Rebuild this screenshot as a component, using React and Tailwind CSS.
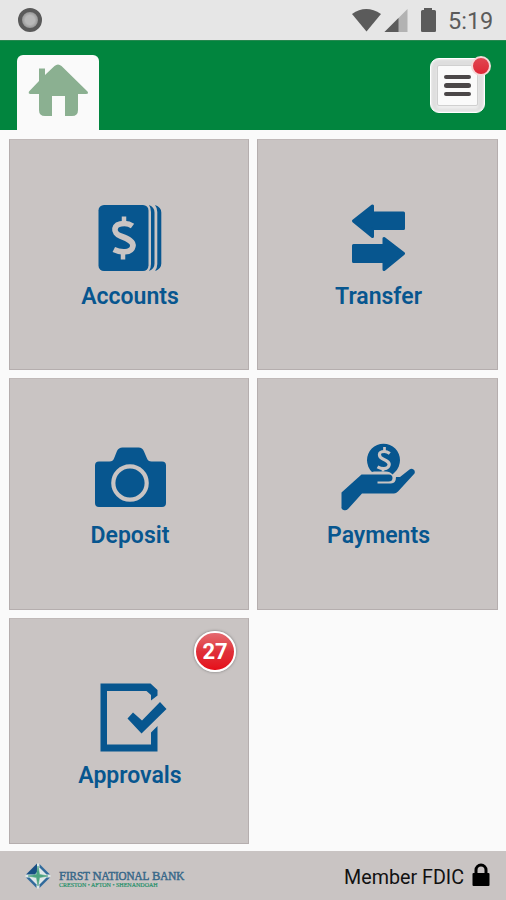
import React from "react";

function AccountsIcon() {
  return (
    <svg width="80" height="70" viewBox="0 0 80 70" fill="#07568f">
      <rect x="9.500" y="2" width="50" height="66" rx="5.500" />
      <path d="M60 2Q65.500 4 65.500 9.500V60.500Q65.500 66 60 68Q62 65 62 61V9Q62 5 60 2z" />
      <path d="M66 2Q72.300 4 72.300 9.500V60.500Q72.300 66 66 68Q68.300 65 68.300 61V9Q68.300 5 66 2z" />
      <path d="M43.500 23Q40 20.500 35.500 20.500C23.500 20.500 23.500 30 31.500 33C39.500 36 45 38.500 43.800 43.500C42.500 50.500 31 49.500 24.800 46.500" fill="none" stroke="#c9c4c3" strokeWidth="5.700" />
      <path d="M35 13.500v7M34 48v8.500" stroke="#c9c4c3" strokeWidth="4.500" />
    </svg>
  );
}

function TransferIcon() {
  return (
    <svg width="80" height="70" viewBox="0 0 80 70" fill="#07568f" stroke="#07568f" strokeWidth="3" strokeLinejoin="round">
      <path d="M15.500 18 34.500 3v7H65.500V25.500H34.500v8z" />
      <path d="M65.500 50.500 46 35.500v7H15.500V58.500H46v8z" />
    </svg>
  );
}

function DepositIcon() {
  return (
    <svg width="80" height="70" viewBox="0 0 80 70" fill="#07568f">
      <path d="M10 19.500h10.500q3.500 0 4.500-3l3-7.500Q29.500 5.500 33.500 5.500h16q4 0 5.500 4l3 7q1 3 4.500 3H73q4 0 4 4v37.500q0 4-4 4H10q-4 0-4-4V23.500q0-4 4-4z" />
      <circle cx="41" cy="41" r="16.700" fill="none" stroke="#c9c4c3" strokeWidth="4.200" />
    </svg>
  );
}

function PaymentsIcon() {
  return (
    <svg width="80" height="70" viewBox="0 0 80 70" fill="#07568f">
      <path d="M34 30A16.500 16.500 0 1 1 57 30L54.500 32.500Q52 29.500 48 29.500H36z" />
      <path d="M51.800 11.500Q49 9.500 46.500 9.500C39.500 9.500 40.500 15 45 17C49.500 19 52 20.500 51 23.500C49.500 28 43 26.800 39.500 24.800" fill="none" stroke="#c9c4c3" strokeWidth="3.200" />
      <path d="M46.500 5v4M45 26v3.500" stroke="#c9c4c3" strokeWidth="2.700" />
      <path d="M23.500 32.500H51q3.500 0 3.500 3.500t-4 3.500H39.500v2H53q5 0 5-6.500h4L71.500 27.500q2-1.500 4 0t1 4L60 49.500q-2 2-4 2H24L10 67q-2 2-4.500 1t-2-3V50.500z" />
    </svg>
  );
}

function ApprovalsIcon() {
  return (
    <svg width="80" height="70" viewBox="0 0 80 70" fill="#07568f">
      <path d="M11.500 1.500H61.500L68.500 8V13.500L62 18.500V13L57.500 9H18V62.500H62V50.500L68.500 44V69.500H11.500z" />
      <path d="M38.500 36.500 44 30.500 53 38.500 71 20 77.500 27 52.500 51.500z" />
    </svg>
  );
}

function Tile({ icon, label, badge }) {
  return (
    <div className="relative flex flex-col items-center border border-[#b5aeae] border-t-[#c0b9b8] bg-[#c9c4c3] pt-[63px] text-[#07568f]">
      {icon}
      <div className="mt-3 ml-[2px] text-[23px] leading-6 font-semibold whitespace-nowrap">{label}</div>
      {badge && (
        <div className="absolute top-[12px] right-[12px] flex h-[41px] w-[42px] items-center justify-center rounded-full border-2 border-white bg-linear-to-b from-[#e46970] via-[#df2f39] to-[#e60b18] text-[22px] font-bold text-white shadow-[0_0_3px_#777]">
          {badge}
        </div>
      )}
    </div>
  );
}

function BankLogo() {
  return (
    <div className="flex items-center gap-[8px]">
      <svg width="26" height="26" viewBox="0 0 26 26">
        <path d="M13 0 26 13 13 26 0 13z" fill="#dfe7e8" />
        <path d="M12 .5 1 11.500 10 11.500 12 9z" fill="#174e83" />
        <path d="M1 14.500 11.500 25V21.500L4.500 14.500z" fill="#316a9b" />
        <path d="M14.500 1 25 11.500H21.500L14.500 4.500z" fill="#316a9b" />
        <path d="M25 14.500 14.500 25V21.500L21.500 14.500z" fill="#316a9b" />
        <path d="M13 3 14.500 11.500 23 13 14.500 14.500 13 23 11.500 14.500 3 13 11.500 11.500z" fill="#4ba380" stroke="#4ba380" strokeWidth=".6" />
      </svg>
      <div className="w-[130px] pt-[7px] whitespace-nowrap">
        <div className="origin-left scale-x-[.97] font-['Liberation_Serif',serif] text-[12px] leading-[12px] tracking-[-0.1px] text-[#386889] [-webkit-text-stroke:.45px_#386889]">
          <span className="text-[13px]">F</span><span className="text-[11.500px]">IRST</span> <span className="text-[13px]">N</span><span className="text-[11.500px]">ATIONAL</span> <span className="text-[13px]">B</span><span className="text-[11.500px]">ANK</span>
        </div>
        <div className="font-['Liberation_Serif',serif] text-[6px] leading-[7px] text-[#26906a] [-webkit-text-stroke:.2px_#26906a]">CRESTON • AFTON • SHENANDOAH</div>
      </div>
    </div>
  );
}

export default function App() {
  return (
    <div className="flex h-[900px] w-[506px] flex-col overflow-hidden bg-[#fafafa] font-[Roboto,sans-serif]">
      <div className="flex h-10 shrink-0 items-center bg-[#e6e6e6] pr-[12px] pl-[18px] text-[#5b5b5b]">
        <div className="h-6 w-6 rounded-full border-4 border-[#5a5a5a] bg-[radial-gradient(circle,#b8b8b8_40%,#929292_75%)]" />
        <svg className="ml-auto" width="88" height="26" viewBox="0 0 88 26" fill="#5b5b5b">
          <path d="M1 7Q15 -3 30 7L15.500 24.500z" />
          <path d="M56.500 2V25H33.500z" fill="#b2b2b2" />
          <path d="M47.500 11V25H33.500z" />
          <path d="M73 3V1h8v2h2.500q1.500 0 1.500 1.500V24q0 1-1.500 1h-12q-1.500 0-1.500-1V4.500Q70 3 71.500 3z" />
        </svg>
        <div className="mt-[2px] ml-[9px] w-[46px] text-[23.500px] leading-7">5:19</div>
      </div>
      <header className="flex h-[90px] shrink-0 items-start justify-between border-t border-[#26884f] bg-[#01853e] pr-[21px] pl-[17px]">
        <div className="mt-[14px] flex h-[75px] w-[82px] justify-center rounded-t-[6px] bg-[#fafafa]">
          <svg className="mt-[8px]" width="62" height="56" viewBox="0 0 62 56" fill="#8bb091">
            <path d="M2 28.500 12 18V5.500h6V12L27.500 3q3.500-3 7 0L60.500 28.500Q62 31 59 31H51v16q0 6-6 6H38V33H25v20H18q-6 0-6-6V31H3.500Q1 31 2 28.500z" />
          </svg>
        </div>
        <div className="relative mt-[17px] flex h-[55px] w-[55px] items-center justify-center rounded-[9px] border border-white bg-[#dedede] shadow-[inset_0_0_3px_#fff]">
          <div className="flex h-[41px] w-[41px] flex-col items-center justify-center gap-[4px] rounded-[2px] border border-[#d0d0d0] bg-[#fafafa] shadow-[0_3px_3px_#eee]">
            <span className="h-[4.500px] w-[27px] rounded-full bg-[#4b4748]" />
            <span className="h-[4.500px] w-[27px] rounded-full bg-[#4b4748]" />
            <span className="h-[4.500px] w-[27px] rounded-full bg-[#4b4748]" />
          </div>
          <div className="absolute -top-[3px] -right-[7px] h-[20px] w-[20px] rounded-full border-2 border-[#f4d8d8] bg-linear-to-b from-[#e04551] to-[#df2535]" />
        </div>
      </header>
      <main className="grid h-[721px] shrink-0 grid-cols-[240px_241px] grid-rows-[231px_231.500px_226px] gap-x-2 gap-y-[8px] px-[9px] pt-[9px]">
        <Tile icon={<AccountsIcon />} label="Accounts" />
        <Tile icon={<TransferIcon />} label="Transfer" />
        <Tile icon={<DepositIcon />} label="Deposit" />
        <Tile icon={<PaymentsIcon />} label="Payments" />
        <Tile icon={<ApprovalsIcon />} label="Approvals" badge="27" />
      </main>
      <footer className="flex h-[49px] shrink-0 items-center justify-between bg-[#c9c4c3] pr-[16px] pl-[25px]">
        <BankLogo />
        <div className="flex items-center gap-[8px] text-[19.700px] text-[#111]">
          <span className="pt-[4px]">Member FDIC</span>
          <svg width="18" height="24" viewBox="0 0 18 24">
            <path d="M4 12V7a5 5 0 0 1 10 0v5" fill="none" stroke="#000" strokeWidth="3" />
            <rect x=".5" y="10" width="17" height="13" rx="1" fill="#000" />
          </svg>
        </div>
      </footer>
    </div>
  );
}
